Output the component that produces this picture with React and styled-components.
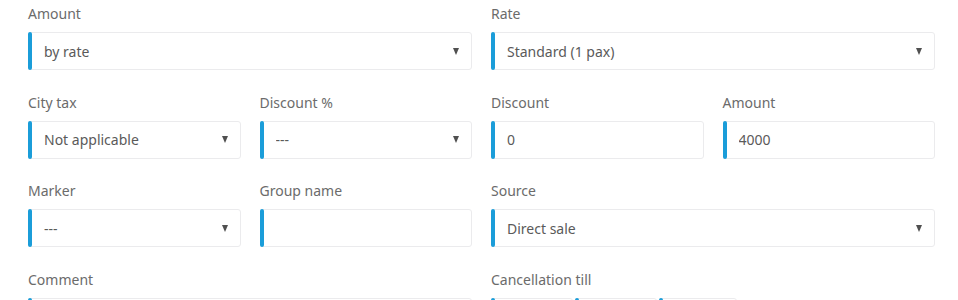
import styled, { createGlobalStyle } from "styled-components";

const GlobalStyle = createGlobalStyle`
  body {
    margin: 0;
    background: #ffffff;
    font-family: "Noto Sans", "Open Sans", sans-serif;
  }
`;

const Form = styled.div`
  display: grid;
  grid-template-columns: repeat(4, 1fr);
  column-gap: 19px;
  row-gap: 22.5px;
  padding: 4px 23px 0 28px;
  height: 300px;
  overflow: hidden;
  box-sizing: border-box;
`;

const Field = styled.div`
  display: flex;
  flex-direction: column;
  grid-column: span ${(p) => p.span || 1};
  min-width: 0;
`;

const Label = styled.div`
  font-size: 14px;
  line-height: 20px;
  color: #6b6b6b;
  margin-bottom: 8px;
`;

const Box = styled.div`
  position: relative;
  display: flex;
  align-items: center;
  height: 38px;
  box-sizing: border-box;
  border: 1px solid #ebebed;
  border-radius: 3px;
  padding: 0 12px 0 15px;
  font-size: 14px;
  color: #5a5a5a;
  background: #fff;
  width: ${(p) => p.width || "auto"};

  &::before {
    content: "";
    position: absolute;
    left: -1px;
    top: -1px;
    bottom: -1px;
    width: 4px;
    border-radius: 2px;
    background: #1b9dd9;
  }
`;

const Value = styled.span`
  flex: 1;
  white-space: nowrap;
  overflow: hidden;
`;

const Arrow = styled.span`
  width: 0;
  height: 0;
  border-left: 3.5px solid transparent;
  border-right: 3.5px solid transparent;
  border-top: 7px solid #505050;
`;

const BoxRow = styled.div`
  display: flex;
  gap: 2px;
`;

function Select({ value }) {
  return (
    <Box>
      <Value>{value}</Value>
      <Arrow />
    </Box>
  );
}

function Input({ value }) {
  return (
    <Box>
      <Value>{value}</Value>
    </Box>
  );
}

export default function App() {
  return (
    <>
      <GlobalStyle />
      <Form>
        <Field span={2}>
          <Label>Amount</Label>
          <Select value="by rate" />
        </Field>
        <Field span={2}>
          <Label>Rate</Label>
          <Select value="Standard (1 pax)" />
        </Field>

        <Field>
          <Label>City tax</Label>
          <Select value="Not applicable" />
        </Field>
        <Field>
          <Label>Discount %</Label>
          <Select value="---" />
        </Field>
        <Field>
          <Label>Discount</Label>
          <Input value="0" />
        </Field>
        <Field>
          <Label>Amount</Label>
          <Input value="4000" />
        </Field>

        <Field>
          <Label>Marker</Label>
          <Select value="---" />
        </Field>
        <Field>
          <Label>Group name</Label>
          <Input value="" />
        </Field>
        <Field span={2}>
          <Label>Source</Label>
          <Select value="Direct sale" />
        </Field>

        <Field span={2}>
          <Label>Comment</Label>
          <Input value="" />
        </Field>
        <Field span={2}>
          <Label>Cancellation till</Label>
          <BoxRow>
            <Box width="82px" />
            <Box width="82px" />
            <Box width="78px" />
          </BoxRow>
        </Field>
      </Form>
    </>
  );
}
